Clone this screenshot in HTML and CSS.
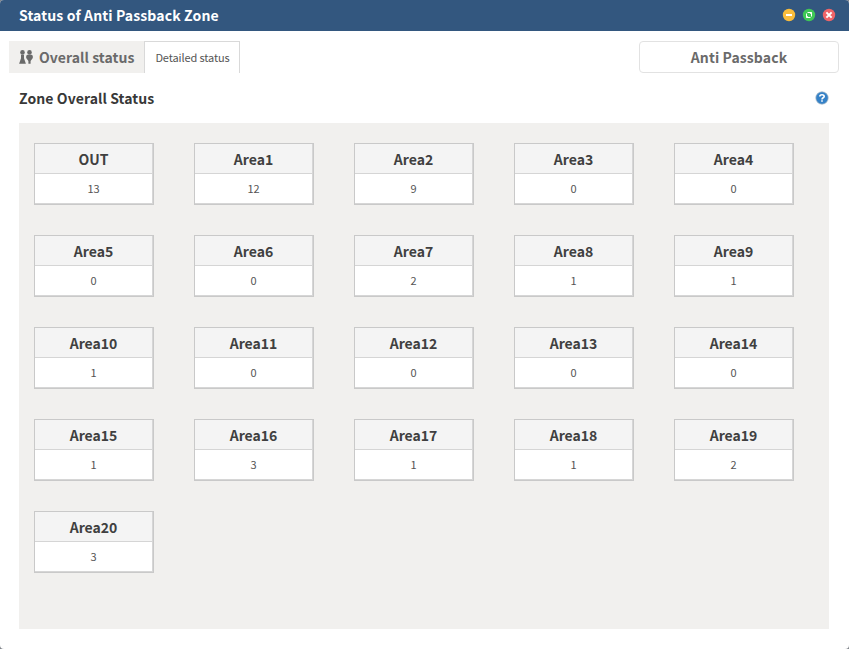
FILE: index.html
```html
<!DOCTYPE html>
<html lang="en">
<head>
<meta charset="utf-8">
<title>Status of Anti Passback Zone</title>
<link rel="stylesheet" href="styles.css">
</head>
<body>
<div class="window">
  <header class="titlebar">
    <h1>Status of Anti Passback Zone</h1>
    <div class="controls">
      <svg viewBox="0 0 14 14"><circle cx="7" cy="7" r="6.2" fill="#f9bd3c"/><path d="M4 7h6" stroke="#fff" stroke-width="2"/></svg>
      <svg viewBox="0 0 14 14"><circle cx="7" cy="7" r="6.2" fill="#3fc856"/><path d="M5.5 4.5h4v4M4.5 5.5v4h4M9.5 4.5L8.2 5.8M4.5 9.5l1.3-1.3" fill="none" stroke="#fff" stroke-width="1"/></svg>
      <svg viewBox="0 0 14 14"><circle cx="7" cy="7" r="6.2" fill="#ef6468"/><path d="M4.4 4.4l5.2 5.2M9.6 4.4L4.4 9.6" stroke="#fff" stroke-width="2"/></svg>
    </div>
  </header>
  <nav class="toolbar">
    <div class="tabs">
      <div class="tab tab-overall">
        <svg viewBox="0 0 14 14"><g fill="#6a6a6a"><circle cx="3.5" cy="2.4" r="2.3"/><path d="M2 4.7h3v3.6l1.9 5.5H.1L2 8.3z"/><circle cx="10.5" cy="2.4" r="2.3"/><path d="M7.2 6.2q0-1.5 1.5-1.5h3.6q1.5 0 1.5 1.5v1.7l-2.2 3.1v2.8H9.4V11L7.2 7.9z"/></g></svg>
        <span>Overall status</span>
      </div>
      <div class="tab tab-detail">Detailed status</div>
    </div>
    <div class="zone-name">Anti Passback</div>
  </nav>
  <div class="heading">
    <h2>Zone Overall Status</h2>
    <svg viewBox="0 0 14 14"><circle cx="7" cy="7" r="6.2" fill="#3582c8" stroke="#a9b7c4" stroke-width=".7"/><path d="M4.8 5.6Q4.8 3.7 7 3.7T9.2 5.5C9.2 6.8 7 6.8 7 8.4M7 9.2v1.6" fill="none" stroke="#fff" stroke-width="1.6"/></svg>
  </div>
  <main class="areas">
    <div class="card"><h3>OUT</h3><p>13</p></div>
    <div class="card"><h3>Area1</h3><p>12</p></div>
    <div class="card"><h3>Area2</h3><p>9</p></div>
    <div class="card"><h3>Area3</h3><p>0</p></div>
    <div class="card"><h3>Area4</h3><p>0</p></div>
    <div class="card"><h3>Area5</h3><p>0</p></div>
    <div class="card"><h3>Area6</h3><p>0</p></div>
    <div class="card"><h3>Area7</h3><p>2</p></div>
    <div class="card"><h3>Area8</h3><p>1</p></div>
    <div class="card"><h3>Area9</h3><p>1</p></div>
    <div class="card"><h3>Area10</h3><p>1</p></div>
    <div class="card"><h3>Area11</h3><p>0</p></div>
    <div class="card"><h3>Area12</h3><p>0</p></div>
    <div class="card"><h3>Area13</h3><p>0</p></div>
    <div class="card"><h3>Area14</h3><p>0</p></div>
    <div class="card"><h3>Area15</h3><p>1</p></div>
    <div class="card"><h3>Area16</h3><p>3</p></div>
    <div class="card"><h3>Area17</h3><p>1</p></div>
    <div class="card"><h3>Area18</h3><p>1</p></div>
    <div class="card"><h3>Area19</h3><p>2</p></div>
    <div class="card"><h3>Area20</h3><p>3</p></div>
  </main>
</div>
</body>
</html>
```

FILE: styles.css
```css
* { box-sizing: border-box; margin: 0; }
body { background: #7f848a; font-family: "Noto Sans CJK KR", sans-serif; overflow: hidden; }
.window { height: 649px; background: #fff; border-radius: 4px; overflow: hidden; }
.titlebar { height: 31px; background: #33577f; display: flex; justify-content: space-between; padding: 0 13px 0 19px; }
.titlebar h1 { font-size: 14px; letter-spacing: .12px; line-height: 30px; font-weight: 700; color: #fff; }
.controls { display: flex; gap: 6px; padding-top: 8px; }
.controls svg { width: 14px; height: 14px; }
.toolbar { display: flex; justify-content: space-between; padding: 10px 10px 0 9px; }
.tabs { display: flex; }
.tab { height: 32px; line-height: 32px; }
.tab-overall { width: 135px; background: #f1f0ee; display: flex; padding-left: 10px; color: #6a6a6a; font-size: 14px; letter-spacing: .05px; font-weight: 700; white-space: nowrap; }
.tab-overall svg { width: 14px; height: 14px; margin: 9px 6px 0 0; }
.tab-detail { width: 96px; border: 1px solid #d9d9d9; border-bottom: 0; font-size: 11px; letter-spacing: -.12px; line-height: 30px; padding-left: 1px; color: #555; text-align: center; white-space: nowrap; }
.zone-name { width: 200px; height: 32px; border: 1px solid #e2e2e2; border-radius: 4px; text-align: center; color: #6a6a6a; font-size: 14px; letter-spacing: .1px; line-height: 30px; font-weight: 700; }
.heading { height: 50px; padding: 0 20px 0 19px; display: flex; justify-content: space-between; }
.heading h2 { font-size: 14px; letter-spacing: .08px; line-height: 50px; font-weight: 700; color: #383838; }
.heading svg { width: 14px; height: 14px; margin-top: 18px; }
.areas { margin: 0 20px 0 19px; height: 506px; background: #f1f0ee; padding: 20px 15px; display: grid; grid-template-columns: repeat(5, 120px); grid-auto-rows: 62px; gap: 30px 40px; align-content: start; }
.card { border: 1px solid #c9c9c9; padding: 0 1px 1px 0; box-shadow: inset -1px -1px #d6d6d6; background: #fff; text-align: center; }
.card h3 { height: 30px; background: #f4f4f4; border-bottom: 1px solid #d5d5d5; font-size: 14px; line-height: 30px; font-weight: 700; color: #404040; }
.card p { font-size: 11px; line-height: 29px; color: #555; }
```
